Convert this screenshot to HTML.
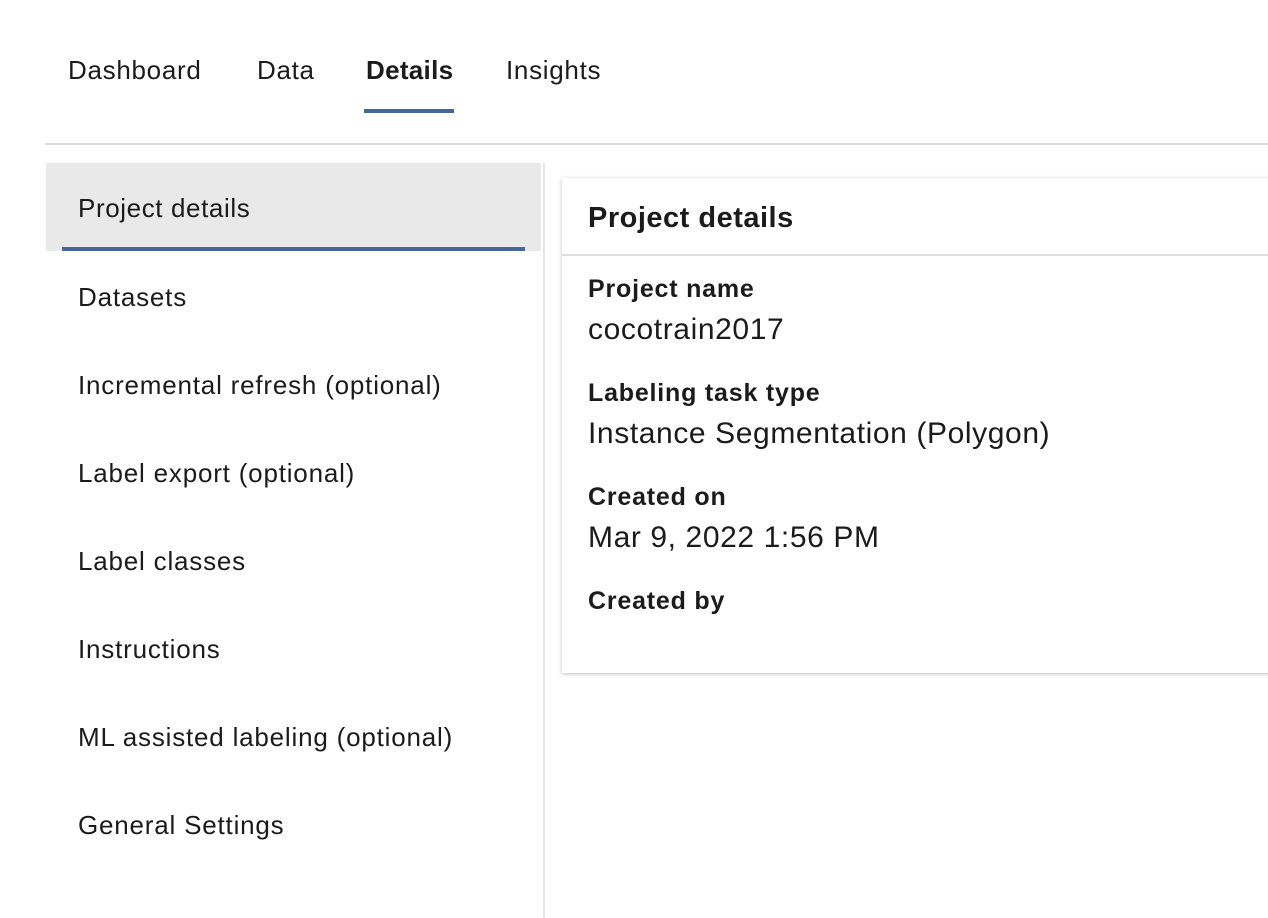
<!DOCTYPE html>
<html><head><style>
body{margin:0;width:1268px;height:918px;background:#fff;font-family:"Liberation Sans",sans-serif;color:#1b1b1b;position:relative;overflow:hidden}
.a{position:absolute;white-space:nowrap}
.nav{font-size:26px;top:55px;letter-spacing:0.7px}
.side{font-size:26px;left:78px;letter-spacing:0.8px}
.lab{font-size:25px;font-weight:bold;left:588px;letter-spacing:0.8px}
.val{font-size:30px;left:588px;letter-spacing:0.6px}
</style></head><body>
<div class="a nav" style="left:68px">Dashboard</div>
<div class="a nav" style="left:257px">Data</div>
<div class="a nav" style="left:366px;font-weight:bold;letter-spacing:0.3px">Details</div>
<div class="a nav" style="left:506px">Insights</div>
<div class="a" style="left:364px;top:109px;width:90px;height:4px;background:#46679a"></div>
<div class="a" style="left:45px;top:143px;width:1223px;height:2px;background:#dcdcdc"></div>
<div class="a" style="left:46px;top:163px;width:495px;height:88px;background:#e9e9e9"></div>
<div class="a" style="left:62px;top:247px;width:463px;height:4px;background:#46679a"></div>
<div class="a" style="left:543px;top:163px;width:2px;height:755px;background:#e6e6e6"></div>
<div class="a side" style="top:193px;letter-spacing:0.6px">Project details</div>
<div class="a side" style="top:282px">Datasets</div>
<div class="a side" style="top:370px">Incremental refresh (optional)</div>
<div class="a side" style="top:458px">Label export (optional)</div>
<div class="a side" style="top:546px">Label classes</div>
<div class="a side" style="top:634px">Instructions</div>
<div class="a side" style="top:722px">ML assisted labeling (optional)</div>
<div class="a side" style="top:810px">General Settings</div>
<div class="a" style="left:562px;top:178px;width:720px;height:495px;background:#fff;box-shadow:0 1px 4px rgba(0,0,0,.25)"></div>
<div class="a" style="left:562px;top:254px;width:706px;height:2px;background:#e0e0e0"></div>
<div class="a" style="left:588px;top:202px;font-size:29px;font-weight:bold;letter-spacing:0.5px">Project details</div>
<div class="a lab" style="top:275px">Project name</div>
<div class="a val" style="top:313px">cocotrain2017</div>
<div class="a lab" style="top:379px">Labeling task type</div>
<div class="a val" style="top:417px">Instance Segmentation (Polygon)</div>
<div class="a lab" style="top:483px">Created on</div>
<div class="a val" style="top:521px">Mar 9, 2022 1:56 PM</div>
<div class="a lab" style="top:587px">Created by</div>
</body></html>
